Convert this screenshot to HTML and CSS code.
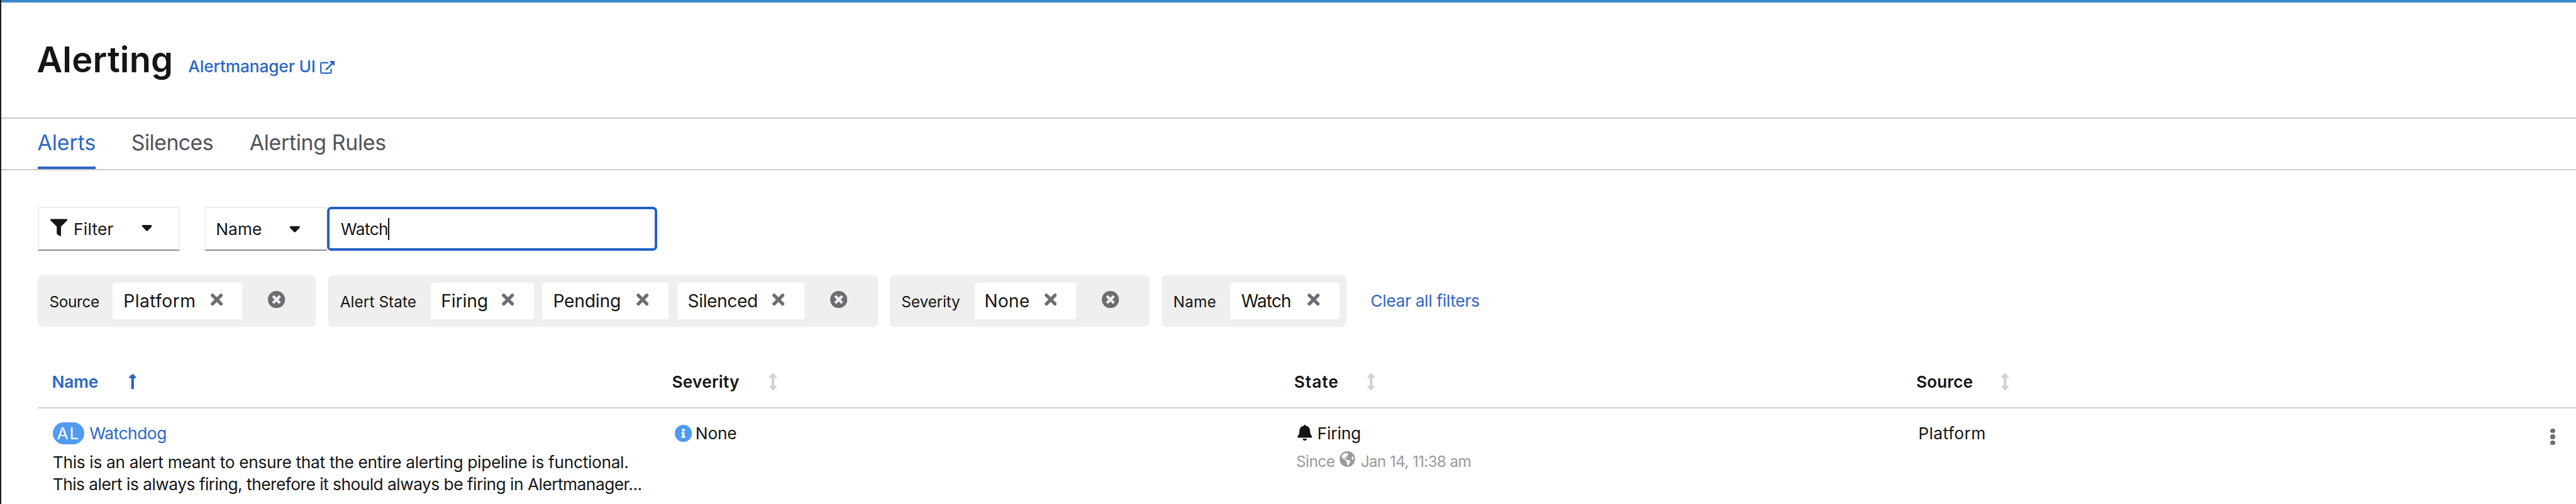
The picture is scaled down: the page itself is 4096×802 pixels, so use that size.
FILE: index.html
```html
<!DOCTYPE html>
<html lang="en">
<head>
<meta charset="utf-8">
<title>Alerting</title>
<link rel="stylesheet" href="styles.css">
</head>
<body>
<svg class="sprite" aria-hidden="true">
  <symbol id="times" viewBox="0 80 352 352"><path d="M242.72 256l100.07-100.07c12.28-12.28 12.28-32.19 0-44.48l-22.24-22.24c-12.28-12.28-32.19-12.28-44.48 0L176 189.28 75.93 89.21c-12.28-12.28-32.19-12.28-44.48 0L9.21 111.45c-12.28 12.28-12.28 32.19 0 44.48L109.28 256 9.21 356.07c-12.28 12.28-12.28 32.19 0 44.48l22.24 22.24c12.28 12.28 32.2 12.28 44.48 0L176 322.72l100.07 100.07c12.28 12.28 32.2 12.28 44.48 0l22.24-22.24c12.28-12.28 12.28-32.19 0-44.48L242.72 256z"/></symbol>
  <symbol id="times-circle" viewBox="8 8 496 496"><path d="M256 8C119 8 8 119 8 256s111 248 248 248 248-111 248-248S393 8 256 8zm121.6 313.1c4.7 4.7 4.7 12.3 0 17L338 377.6c-4.7 4.7-12.3 4.7-17 0L256 312l-65.1 65.6c-4.7 4.7-12.3 4.7-17 0L134.4 338c-4.7-4.7-4.7-12.3 0-17l65.6-65-65.6-65.1c-4.7-4.7-4.7-12.3 0-17l39.6-39.6c4.7-4.7 12.3-4.7 17 0l65 65.7 65.1-65.6c4.7-4.7 12.3-4.7 17 0l39.6 39.6c4.7 4.7 4.7 12.3 0 17L312 256l65.6 65.1z"/></symbol>
  <symbol id="sort" viewBox="19 0 218 512"><path d="M214.059 377.941H168V134.059h46.059c21.382 0 32.09-25.851 16.971-40.971L144.971 7.029c-9.373-9.373-24.568-9.373-33.941 0L24.971 93.088c-15.119 15.119-4.411 40.971 16.971 40.971H88v243.882H41.941c-21.382 0-32.09 25.851-16.971 40.971l86.059 86.059c9.373 9.373 24.568 9.373 33.941 0l86.059-86.059c15.12-15.119 4.412-40.971-16.97-40.971z"/></symbol>
  <symbol id="caret" viewBox="25 192 270 167"><path d="M31.3 192h257.3c17.8 0 26.7 21.5 14.1 34.1L174.1 354.8c-7.8 7.8-20.5 7.8-28.3 0L17.2 226.1C4.6 213.500 13.500 192 31.3 192z"/></symbol>
</svg>
<div class="page">
  <div class="topbar"></div>
  <header class="header">
    <h1 class="title">Alerting</h1>
    <a class="link external"><span>Alertmanager UI</span>
      <svg class="external-icon" viewBox="0 0 24 21"><path d="M13.500 3H2.600A1.400 1.400 0 0 0 1.200 4.400V18.400A1.400 1.400 0 0 0 2.600 19.800H16.600A1.400 1.400 0 0 0 18 18.400V12.500" fill="none" stroke="currentColor" stroke-width="2.300"/><path d="M9.500 14.500L20 4" fill="none" stroke="currentColor" stroke-width="2.800"/><path d="M16.200 0H23.200Q24 0 24 .8V7.300Q23.300 8.300 22.400 7.500L16 1.600Q15.300.6 16.200 0Z"/></svg>
    </a>
  </header>
  <nav class="tabs">
    <a class="tab tab-alerts active">Alerts</a>
    <a class="tab tab-silences">Silences</a>
    <a class="tab tab-rules">Alerting Rules</a>
  </nav>
  <div class="toolbar">
    <div class="select select-filter">
      <svg class="funnel" viewBox="0 0 512 512"><path d="M487.976 0H24.028C2.710 0-8.047 25.866 7.058 40.971L192 225.941V432c0 7.831 3.821 15.170 10.237 19.662l80 55.980C298.020 518.690 320 507.493 320 487.980V225.941l184.947-184.970C520.021 25.896 509.338 0 487.976 0z"/></svg>
      <span>Filter</span>
      <svg class="caret"><use href="#caret"/></svg>
    </div>
    <div class="select select-name">
      <span>Name</span>
      <svg class="caret"><use href="#caret"/></svg>
    </div>
    <div class="search"><span>Watch</span><i class="cursor"></i></div>
  </div>
  <div class="filters">
    <div class="group g-source">
      <span class="label">Source</span>
      <div class="chip c-platform"><span>Platform</span><svg class="x"><use href="#times"/></svg></div>
      <svg class="clear"><use href="#times-circle"/></svg>
    </div>
    <div class="group g-state">
      <span class="label">Alert State</span>
      <div class="chip c-firing"><span>Firing</span><svg class="x"><use href="#times"/></svg></div>
      <div class="chip c-pending"><span>Pending</span><svg class="x"><use href="#times"/></svg></div>
      <div class="chip c-silenced"><span>Silenced</span><svg class="x"><use href="#times"/></svg></div>
      <svg class="clear"><use href="#times-circle"/></svg>
    </div>
    <div class="group g-severity">
      <span class="label">Severity</span>
      <div class="chip c-none"><span>None</span><svg class="x"><use href="#times"/></svg></div>
      <svg class="clear"><use href="#times-circle"/></svg>
    </div>
    <div class="group g-name">
      <span class="label">Name</span>
      <div class="chip c-watch"><span>Watch</span><svg class="x"><use href="#times"/></svg></div>
    </div>
    <a class="link clear-all">Clear all filters</a>
  </div>
  <div class="table">
    <div class="row head">
      <div class="th th-name"><span>Name</span><svg class="arrow-up" viewBox="0 0 12 25"><path d="M5.100.400Q6-.300 6.900.400L11.700 5Q12.300 6.700 10.800 7H8.200V24.200Q8.200 25 7.400 25H4.600Q3.800 25 3.800 24.200V7H1.200Q-.300 6.700.300 5Z"/></svg></div>
      <div class="th th-severity"><span>Severity</span><svg class="sort"><use href="#sort"/></svg></div>
      <div class="th th-state"><span>State</span><svg class="sort"><use href="#sort"/></svg></div>
      <div class="th th-source"><span>Source</span><svg class="sort"><use href="#sort"/></svg></div>
    </div>
    <div class="row body">
      <div class="td td-name">
        <div class="line"><span class="badge">AL</span><a class="link watchdog">Watchdog</a></div>
        <p class="desc"><span class="desc-1">This is an alert meant to ensure that the entire alerting pipeline is functional.</span><span class="desc-2">This alert is always firing, therefore it should always be firing in Alertmanager...</span></p>
      </div>
      <div class="td td-severity">
        <div class="line"><svg class="info" viewBox="8 8 496 496"><path d="M256 8C119.043 8 8 119.083 8 256c0 136.997 111.043 248 248 248s248-111.003 248-248C504 119.083 392.957 8 256 8zm0 110c23.196 0 42 18.804 42 42s-18.804 42-42 42-42-18.804-42-42 18.804-42 42-42zm56 254c0 6.627-5.373 12-12 12h-88c-6.627 0-12-5.373-12-12v-24c0-6.627 5.373-12 12-12h12v-64h-12c-6.627 0-12-5.373-12-12v-24c0-6.627 5.373-12 12-12h64c6.627 0 12 5.373 12 12v100h12c6.627 0 12 5.373 12 12v24z"/></svg><span>None</span></div>
      </div>
      <div class="td td-state">
        <div class="line"><svg class="bell" viewBox="0 0 24 26"><path d="M12 0C12.900 0 13.600.500 13.700 1.500C18 2.400 20.500 5.500 20.700 10C20.900 14.500 21.700 16.200 23.500 18.200C24.500 19.500 23.700 21 22.300 21H1.700C.300 21-.500 19.500.500 18.200C2.300 16.200 3.100 14.500 3.300 10C3.500 5.500 6 2.400 10.300 1.500C10.400.500 11.100 0 12 0ZM8.500 22.700H15.500C15.300 24.700 13.900 26 12 26S8.700 24.700 8.500 22.700Z"/></svg><span>Firing</span></div>
        <div class="since"><span class="since-label">Since</span><svg class="globe" viewBox="0 8 496 496"><path d="M248 8C111.03 8 0 119.03 0 256s111.03 248 248 248 248-111.03 248-248S384.97 8 248 8zm82.29 357.6c-3.9 3.88-7.99 7.95-11.31 11.28-2.99 3-5.1 6.7-6.17 10.71-1.51 5.66-2.73 11.38-4.77 16.87l-17.39 46.85c-13.76 3-28 4.69-42.65 4.69v-27.38c1.69-12.62-7.64-36.26-22.63-51.25-6-6-9.37-14.14-9.37-22.63v-32.01c0-11.64-6.27-22.34-16.46-27.97-14.37-7.95-34.81-19.06-48.81-26.11-11.48-5.78-22.1-13.14-31.65-21.75l-.8-.72a114.792 114.792 0 0 1-18.06-20.74c-9.38-13.77-24.66-36.42-34.59-51.14 20.47-45.5 57.36-82.04 103.2-101.89l24.01 12.01C203.48 89.74 216 82.01 216 70.11v-11.3c7.99-1.29 16.12-2.11 24.39-2.42l28.3 28.3c6.25 6.25 6.25 16.38 0 22.63L264 112l-10.34 10.34c-3.12 3.12-3.12 8.19 0 11.31l4.69 4.69c3.12 3.12 3.12 8.19 0 11.31l-8 8a8.008 8.008 0 0 1-5.66 2.34h-8.99c-2.08 0-4.08.81-5.58 2.27l-9.92 9.65a8.008 8.008 0 0 0-1.58 9.31l15.59 31.19c2.66 5.32-1.21 11.58-7.15 11.58h-5.64c-1.93 0-3.79-.7-5.24-1.96l-9.28-8.06a16.017 16.017 0 0 0-15.55-3.1l-31.17 10.39a11.95 11.95 0 0 0-8.17 11.34c0 4.53 2.56 8.66 6.61 10.69l11.08 5.54c9.41 4.71 19.79 7.16 30.31 7.16s22.59 27.29 32 32h66.75c8.49 0 16.62 3.37 22.63 9.37l13.69 13.69a30.503 30.503 0 0 1 8.93 21.57 46.536 46.536 0 0 1-13.72 32.98zM417 274.25c-5.79-1.45-10.84-5-14.15-9.97l-17.98-26.97a23.97 23.97 0 0 1 0-26.62l19.59-29.38c2.32-3.47 5.5-6.29 9.24-8.15l12.98-6.49C440.2 193.59 448 223.87 448 256c0 8.67-.74 17.16-1.82 25.54L417 274.25z"/></svg><span class="since-time">Jan 14, 11:38 am</span></div>
      </div>
      <div class="td td-source">
        <div class="line"><span>Platform</span></div>
      </div>
      <div class="kebab"><i></i><i></i><i></i></div>
    </div>
  </div>
</div>
</body>
</html>
```
FILE: styles.css
```css
/* 1rem = ten design units */
html { font-size: 9.7338px; }
* { box-sizing: border-box; }
body {
  margin: 0;
  height: 802px;
  overflow: hidden;
  background: #fff;
  color: #151515;
  font-family: Inter, "Liberation Sans", sans-serif;
  font-size: 2.7rem;
  white-space: nowrap;
}
svg { display: block; flex: none; fill: currentColor; }
.sprite { display: none; }
.page { height: 802px; border-left: 2px solid #1b1d25; }
.link { color: #2b66c6; text-decoration: none; }

.topbar { height: 4px; background: #3988cb; }
.header {
  display: flex;
  align-items: baseline;
  height: 18.8rem;
  padding: 6.44rem 0 0 5.8rem;
}
.title {
  width: 24.75rem;
  margin: 0;
  font-size: 5.75rem;
  line-height: 5.75rem;
  font-weight: 560;
  letter-spacing: .02rem;
}
.external { display: flex; font-weight: 530; letter-spacing: -.015rem; line-height: 3.2rem; }
.external span { width: 21.55rem; }
.external-icon { width: 2.4rem; height: 2.1rem; margin-top: .8rem; }

.tabs {
  display: flex;
  height: 8.6rem;
  padding-left: 6rem;
  border-top: 2px solid #c9c9c9;
  border-bottom: 2px solid #c9c9c9;
  font-size: 3.47rem;
  color: #4f5259;
}
.tab { line-height: 7.9rem; height: 8.2rem; }
.tab.active { color: #2b66c6; border-bottom: 4px solid #2b66c6; }
.tab-alerts { width: 9.4rem; margin-right: 5.85rem; letter-spacing: -.003rem; text-indent: -.1rem; }
.tab-silences { width: 19.3rem; letter-spacing: -.054rem; }
.tab-rules { letter-spacing: -.03rem; }

.toolbar { display: flex; height: 7.2rem; margin: 6rem 0 0 6rem; }
.select {
  display: flex;
  align-items: center;
  border: 2px solid #efefef;
  border-bottom-color: #8a8d90;
}
.select-filter { width: 23.2rem; margin-right: 4rem; padding-left: 1.8rem; }
.select-filter span { width: 11.18rem; letter-spacing: .026rem; }
.funnel { width: 2.8rem; height: 2.9rem; margin: -.4rem 1.02rem 0 0; }
.caret { width: 1.6rem; height: 1rem; margin-top: -.2rem; }
.select-name { width: 20rem; padding-left: 1.65rem; border-right: 0; }
.select-name span { width: 12.15rem; letter-spacing: .012rem; }
.select-name .caret { margin-top: .2rem; }
.search {
  display: flex;
  align-items: center;
  width: 54rem;
  padding-left: 1.85rem;
  border: 4px solid #2460c8;
  border-radius: .7rem;
  letter-spacing: -.06rem;
}
.cursor { width: 2px; height: 3.6rem; background: #151515; }

.filters { display: flex; align-items: center; height: 8.4rem; margin: 4rem 0 0 6rem; gap: 2rem; }
.group {
  display: flex;
  align-items: center;
  flex: none;
  height: 8.4rem;
  border-radius: .7rem;
  background: #efefef;
}
.label { flex: none; padding: .2rem 0 0 1.85rem; font-size: 2.5rem; }
.g-source { width: 45.4rem; }
.g-source .label { width: 12.2rem; letter-spacing: -.032rem; }
.g-state { width: 89.8rem; }
.g-state .label { width: 16.8rem; padding-left: 1.95rem; letter-spacing: .008rem; }
.g-severity { width: 42.4rem; }
.g-severity .label { width: 13.8rem; letter-spacing: -.011rem; }
.g-name { width: 30.2rem; }
.g-name .label { width: 11.2rem; letter-spacing: .024rem; }
.chip {
  display: flex;
  align-items: center;
  justify-content: space-between;
  flex: none;
  height: 6rem;
  margin-right: 1.4rem;
  padding: 0 3.2rem 0 1.75rem;
  border-radius: .4rem;
  background: #fff;
  font-size: 2.9rem;
}
.c-platform { width: 21.2rem; letter-spacing: .046rem; }
.c-firing { width: 16.8rem; padding-left: 1.65rem; letter-spacing: -.013rem; }
.c-pending { width: 20.6rem; letter-spacing: -.022rem; }
.c-silenced { width: 20.8rem; letter-spacing: -.045rem; }
.c-none { width: 16.6rem; padding-left: 1.6rem; letter-spacing: .021rem; }
.c-watch { width: 17.8rem; letter-spacing: -.104rem; }
.x { width: 2rem; height: 2rem; margin-top: -.4rem; color: #6a6e73; }
.clear { width: 2.8rem; height: 2.8rem; margin: -.4rem 5rem 0 auto; color: #6a6e73; }
.clear-all { margin-left: 1.9rem; letter-spacing: -.031rem; }

.table { margin: 4.8rem 0 0 6rem; }
.row { display: grid; grid-template-columns: 101.3rem 101.63rem 101.63rem 1fr auto; }
.head { height: 8.6rem; border-bottom: 2px solid #d2d2d2; font-weight: 600; }
.th { display: flex; align-items: center; padding-left: 2.27rem; }
.th-name { color: #2b66c6; }
.th-name span { width: 12.55rem; letter-spacing: -.01rem; }
.arrow-up { width: 1.2rem; height: 2.5rem; }
.sort { width: 1.26rem; height: 2.8rem; color: #d2d2d2; }
.th-severity span { width: 15.83rem; letter-spacing: .021rem; }
.th-state span { width: 11.9rem; letter-spacing: .1rem; }
.th-source span { width: 13.9rem; letter-spacing: .002rem; }
.td { padding: 2.2rem 0 0 2.4rem; }
.line { display: flex; align-items: center; height: 3.6rem; }
.badge {
  width: 5.2rem;
  height: 3.6rem;
  margin-right: .8rem;
  padding-left: .7rem;
  border-radius: 1.8rem;
  background: #519bee;
  color: #fff;
  line-height: 3.6rem;
  letter-spacing: .187rem;
}
.watchdog { letter-spacing: -.044rem; }
.desc { margin: 1.2rem 0 0; line-height: 3.6rem; }
.desc span { display: block; }
.desc-1 { letter-spacing: -.031rem; }
.desc-2 { letter-spacing: -.051rem; }
.td-severity { padding-left: 2.7rem; }
.info { width: 2.8rem; height: 2.8rem; margin-right: .6rem; color: #519bee; }
.td-severity span { letter-spacing: -.016rem; }
.td-state { padding-left: 2.85rem; }
.bell { width: 2.4rem; height: 2.6rem; margin: -.2rem .8rem 0 0; }
.td-state .line span { letter-spacing: -.011rem; }
.since {
  display: flex;
  align-items: center;
  height: 3.6rem;
  margin: 1.05rem 0 0 -.25rem;
  font-size: 2.5rem;
  color: #9a9a9a;
}
.since-label { width: 7.1rem; letter-spacing: -.054rem; }
.globe { width: 2.55rem; height: 2.55rem; margin: -.75rem .9rem 0 0; }
.since-time { letter-spacing: -.069rem; }
.td-source { padding-left: 2.6rem; letter-spacing: .049rem; }
.kebab { display: flex; flex-direction: column; gap: .17rem; padding: 3.23rem 3.4rem 0 0; }
.kebab i { width: .8rem; height: .8rem; border-radius: 50%; background: #6a6e73; }
```
